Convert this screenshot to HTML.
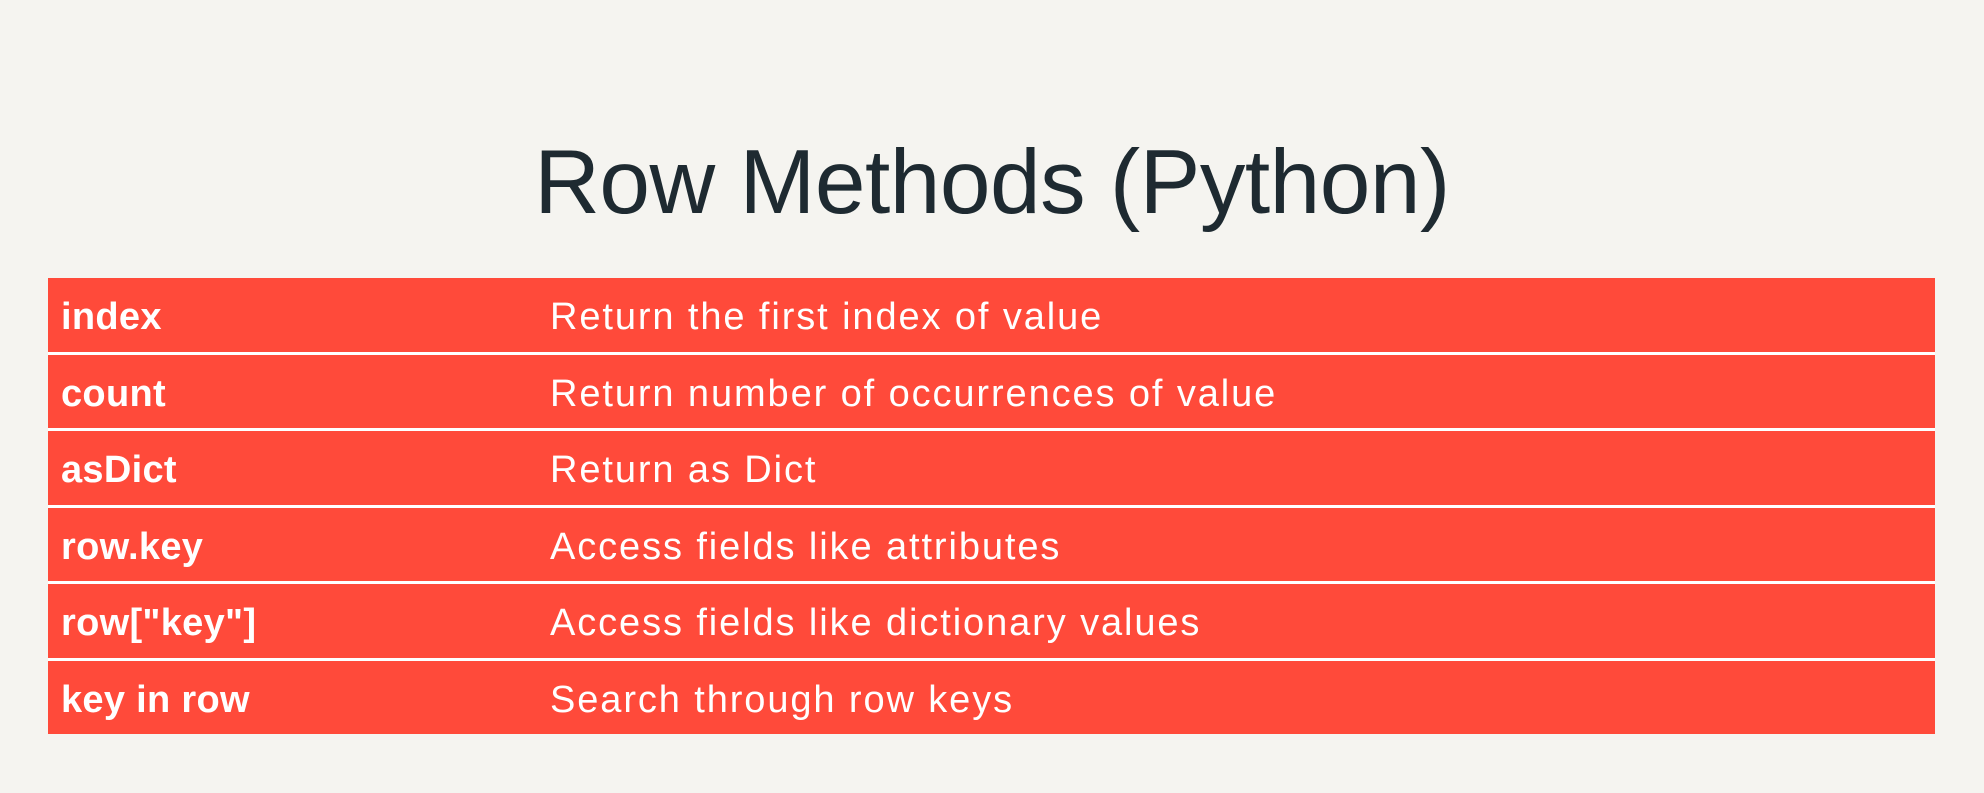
<!DOCTYPE html>
<html><head><style>
html,body{margin:0;padding:0;}
body{width:1984px;height:793px;background:#f5f4f0;position:relative;overflow:hidden;font-family:"Liberation Sans",sans-serif;}
h1{position:absolute;left:0;width:1984px;top:128px;margin:0;text-align:center;font-weight:400;font-size:91px;line-height:110px;color:#1e2a31;letter-spacing:-0.5px;}
.t{position:absolute;left:48px;top:278px;width:1887px;background:#fff;}
.r{height:73.5px;background:#ff4a3a;margin-bottom:3px;position:relative;color:#fff;font-size:38px;}
.r:last-child{margin-bottom:0}
.k{position:absolute;left:13px;top:3px;line-height:73.5px;font-weight:700;letter-spacing:0.3px;}
.v{position:absolute;left:502px;top:3px;line-height:73.5px;letter-spacing:1.9px;}
</style></head><body>
<h1>Row Methods (Python)</h1>
<div class="t">
<div class="r"><span class="k">index</span><span class="v">Return the first index of value</span></div>
<div class="r"><span class="k">count</span><span class="v">Return number of occurrences of value</span></div>
<div class="r"><span class="k">asDict</span><span class="v">Return as Dict</span></div>
<div class="r"><span class="k">row.key</span><span class="v">Access fields like attributes</span></div>
<div class="r"><span class="k">row["key"]</span><span class="v">Access fields like dictionary values</span></div>
<div class="r"><span class="k">key in row</span><span class="v">Search through row keys</span></div>
</div>
</body></html>
